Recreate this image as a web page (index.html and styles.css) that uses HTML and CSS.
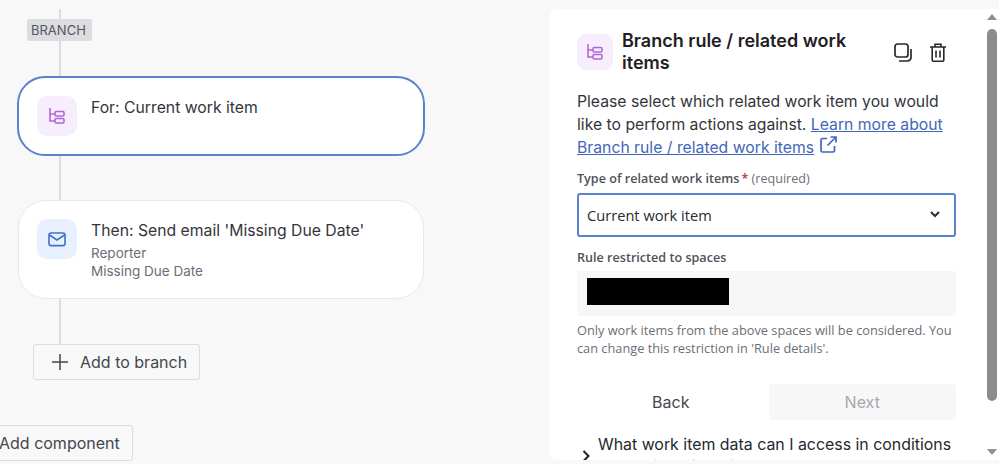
FILE: index.html
```html
<!DOCTYPE html>
<html lang="en">
<head>
    <meta charset="UTF-8" />
    <title>Branch rule</title>
    <link rel="stylesheet" href="styles.css">
</head>
<body>

<div class="page">
    <div class="canvas">
        <div class="flow">
            <div class="tag">BRANCH</div>
            <div class="card card-active">
                <div class="node-icon icon-purple">
                    <svg width="18" height="18" viewBox="0 0 18 18" fill="none" stroke="#b065d8" stroke-width="1.6"><path d="M2 1v13h5M2 7h5"/><rect x="7" y="4.500" width="9" height="4.500" rx="1.200"/><rect x="7" y="11.500" width="9" height="4.500" rx="1.200"/></svg>
                </div>
                <div class="card-text">
                    <div class="card-title">For: Current work item</div>
                </div>
            </div>
            <div class="card card-email">
                <div class="node-icon icon-blue">
                    <svg width="18" height="15" viewBox="0 0 18 15" fill="none" stroke="#3f6fc9" stroke-width="1.6"><rect x="1" y="1" width="16" height="12.600" rx="2"/><path d="M1.500 3l7.500 5 7.500-5"/></svg>
                </div>
                <div class="card-text">
                    <div class="card-title">Then: Send email 'Missing Due Date'</div>
                    <div class="card-sub">Reporter</div>
                    <div class="card-sub">Missing Due Date</div>
                </div>
            </div>
            <div class="btn-add btn-branch">
                <svg width="16" height="16" viewBox="0 0 16 16" fill="none" stroke="#44474e" stroke-width="1.5"><path d="M8 0v16M0 8h16"/></svg>
                <span>Add to branch</span>
            </div>
        </div>
        <div class="btn-add btn-component">Add component</div>
    </div>

    <div class="panel">
        <div class="panel-body">
            <div class="panel-header">
                <div class="panel-icon icon-purple">
                    <svg width="18" height="18" viewBox="0 0 18 18" fill="none" stroke="#b065d8" stroke-width="1.5"><path d="M2 1v13h5M2 7h5"/><rect x="7" y="4.500" width="9" height="4.500" rx="1.200"/><rect x="7" y="11.500" width="9" height="4.500" rx="1.200"/></svg>
                </div>
                <h2 class="panel-title">Branch rule / related work items</h2>
                <div class="panel-actions">
                    <svg width="18" height="19" viewBox="0 0 18 19" fill="none" stroke="#26282c" stroke-width="1.7"><rect x="1" y="1" width="13" height="13" rx="2.500"/><path d="M17 6v8.500a3.500 3.500 0 0 1-3.500 3.500H5"/></svg>
                    <svg width="16" height="19" viewBox="0 0 16 19" fill="none" stroke="#26282c" stroke-width="1.6"><path d="M0 4h16M5 4V1.200h6V4M2.200 4v13a1.200 1.200 0 0 0 1.200 1.200h9.200a1.200 1.200 0 0 0 1.200-1.200V4M6 7.500v7M10 7.500v7"/></svg>
                </div>
            </div>

            <p class="intro">Please select which related work item you would like to perform actions against. <a class="learn" href="#">Learn more about Branch rule / related work items</a> <svg class="ext" width="17" height="17" viewBox="0 0 17 17" fill="none" stroke="#4267b8" stroke-width="1.7"><path d="M7 2.500H2.500a1.500 1.500 0 0 0-1.500 1.500v10.500a1.500 1.500 0 0 0 1.500 1.500H13a1.500 1.500 0 0 0 1.500-1.500V10M7.500 9.500L16 1M10.500 1H16v5.500"/></svg></p>

            <div class="field-label">Type of related work items<span class="star">*</span> <span class="req">(required)</span></div>
            <div class="select">
                <span>Current work item</span>
                <svg width="10" height="7" viewBox="0 0 10 7" fill="none" stroke="#2b2d31" stroke-width="2"><path d="M1 1l4 4 4-4"/></svg>
            </div>

            <div class="field-label label-spaces">Rule restricted to spaces</div>
            <div class="spaces-box"><div class="redacted"></div></div>
            <p class="help">Only work items from the above spaces will be considered. You can change this restriction in 'Rule details'.</p>

            <div class="actions">
                <div class="btn-nav">Back</div>
                <div class="btn-nav btn-disabled">Next</div>
            </div>

            <div class="faq">
                <svg width="8" height="12" viewBox="0 0 8 12" fill="none" stroke="#1f2024" stroke-width="2"><path d="M1.500 1l5 5-5 5"/></svg>
                <div class="faq-text">What work item data can I access in conditions and actions for this rule?</div>
            </div>
        </div>
        <div class="scrollbar">
            <div class="arrow-up"></div>
            <div class="thumb"></div>
            <div class="arrow-down"></div>
        </div>
    </div>
</div>

</body>
</html>
```

FILE: styles.css
```css
* { box-sizing: border-box; }
html, body { height: 100%; }
body {
    margin: 0;
    font-family: 'Inter', 'Liberation Sans', sans-serif;
    background-color: #f8f8f8;
    overflow: hidden;
}
.page {
    display: flex;
    height: 464px;
}

/* left side: rule flow */
.canvas {
    width: 550px;
    flex: none;
    padding-top: 9px;
}
.flow {
    display: flex;
    flex-direction: column;
    align-items: flex-start;
    width: 425px;
    margin-left: 17px;
    background: linear-gradient(#dcdde1, #dcdde1) 42px 0 / 2px 335px no-repeat;
}
.tag {
    margin: 10px 0 0 10px;
    height: 22px;
    padding: 0 4px;
    background: #dcdde1;
    border-radius: 2px;
    color: #55575d;
    font-size: 13px;
    line-height: 22px;
    width: 65px;
}
.card {
    display: flex;
    gap: 14px;
    background: #fff;
    width: 408px;
}
.card-active {
    margin-top: 35px;
    height: 80px;
    padding: 18px;
    border: 2px solid #5b82cc;
    border-radius: 28px;
}
.card-email {
    margin: 44px 0 0 1px;
    width: 406px;
    height: 99px;
    padding: 18px;
    border: 1px solid #e8e8ea;
    border-radius: 28px;
}
.node-icon {
    width: 40px;
    height: 40px;
    flex: none;
    border-radius: 10px;
    display: flex;
    align-items: center;
    justify-content: center;
}
.icon-purple { background: #f6eefd; }
.icon-blue { background: #e8f1fd; }
.card-title {
    font-size: 15.750px;
    line-height: 22px;
    color: #33353a;
}
.card-active .card-title { margin-top: 1px; }
.card-email .card-title { margin-top: 1px; }
.card-sub {
    font-size: 13.500px;
    line-height: 18px;
    color: #6b6e76;
}
.card-email .card-sub:nth-child(2) { margin-top: 2px; }
.btn-add {
    display: flex;
    align-items: center;
    height: 36px;
    background: #f8f8f8;
    border: 1px solid #dcdde1;
    border-radius: 3px;
    font-size: 16px;
    color: #44474e;
}
.btn-branch {
    margin: 45px 0 0 16px;
    width: 167px;
    padding-left: 18px;
    gap: 12px;
}
.btn-component {
    margin: 45px 0 0 -14px;
    width: 147px;
    padding-left: 12px;
}

/* right side: config panel */
.panel {
    display: flex;
    width: 449px;
    height: 451px;
    margin-top: 9px;
    background: #fff;
    border-radius: 8px 0 0 8px;
    overflow: hidden;
}
.panel-body {
    width: 437px;
    flex: none;
    padding: 21px 31px 0 27px;
}
.panel-header {
    display: flex;
    align-items: center;
    gap: 9px;
}
.panel-icon {
    width: 36px;
    height: 36px;
    flex: none;
    border-radius: 9px;
    display: flex;
    align-items: center;
    justify-content: center;
}
.panel-title {
    width: 250px;
    margin: 0;
    font-size: 18px;
    line-height: 22px;
    font-weight: 600;
    color: #1f2024;
}
.panel-actions {
    margin-left: 13px;
    display: flex;
    align-items: center;
    gap: 18px;
}
.intro {
    margin: 17px 0 0;
    font-size: 15.750px;
    line-height: 22.500px;
    color: #33353a;
}
.learn { color: #4267b8; }
.ext { vertical-align: 0; margin-left: 1px; }
.field-label {
    margin-top: 10px;
    font-family: 'Open Sans', 'Noto Sans', sans-serif;
    font-size: 12.600px;
    line-height: 18px;
    font-weight: 600;
    color: #505258;
}
.star { color: #b03a2e; margin-left: 2px; }
.req { font-weight: 400; color: #6b6e76; }
.select {
    margin-top: 5px;
    height: 44px;
    padding: 0 14px 0 8px;
    display: flex;
    align-items: center;
    justify-content: space-between;
    border: 2px solid #5b82cc;
    border-radius: 3px;
    font-family: 'Open Sans', 'Noto Sans', sans-serif;
    font-size: 14.650px;
    color: #292a2e;
}
.label-spaces { margin-top: 12px; }
.spaces-box {
    margin-top: 4px;
    height: 45px;
    padding: 7px 10px;
    background: #f7f7f7;
    border-radius: 3px;
}
.redacted {
    width: 142px;
    height: 27px;
    background: #000;
}
.help {
    margin: 5px 0 0;
    font-family: 'Open Sans', 'Noto Sans', sans-serif;
    font-size: 12.770px;
    line-height: 18px;
    color: #6b6e76;
}
.actions {
    display: flex;
    gap: 4px;
    margin-top: 27px;
}
.btn-nav {
    flex: 1;
    height: 36px;
    border-radius: 3px;
    display: flex;
    align-items: center;
    justify-content: center;
    font-size: 16px;
    color: #44474e;
}
.btn-disabled {
    background: #f7f7f7;
    color: #a5a8ad;
}
.faq {
    display: flex;
    align-items: flex-end;
    gap: 8px;
    margin: 14px 0 0 5px;
}
.faq svg { flex: none; margin-bottom: 16px; }
.faq-text {
    font-size: 15.900px;
    line-height: 22px;
    color: #26282c;
}

/* scrollbar */
.scrollbar {
    width: 12px;
    flex: none;
    display: flex;
    flex-direction: column;
    align-items: center;
    padding-right: 2px;
}
.arrow-up, .arrow-down {
    width: 0;
    height: 0;
    border-left: 5px solid transparent;
    border-right: 5px solid transparent;
}
.arrow-up {
    margin-top: 5px;
    border-bottom: 6px solid #8f8f8f;
}
.arrow-down {
    margin-top: 48px;
    border-top: 6px solid #8f8f8f;
}
.thumb {
    margin-top: 9px;
    width: 10px;
    height: 372px;
    background: #8c8c8c;
    border-radius: 5px;
}
```
